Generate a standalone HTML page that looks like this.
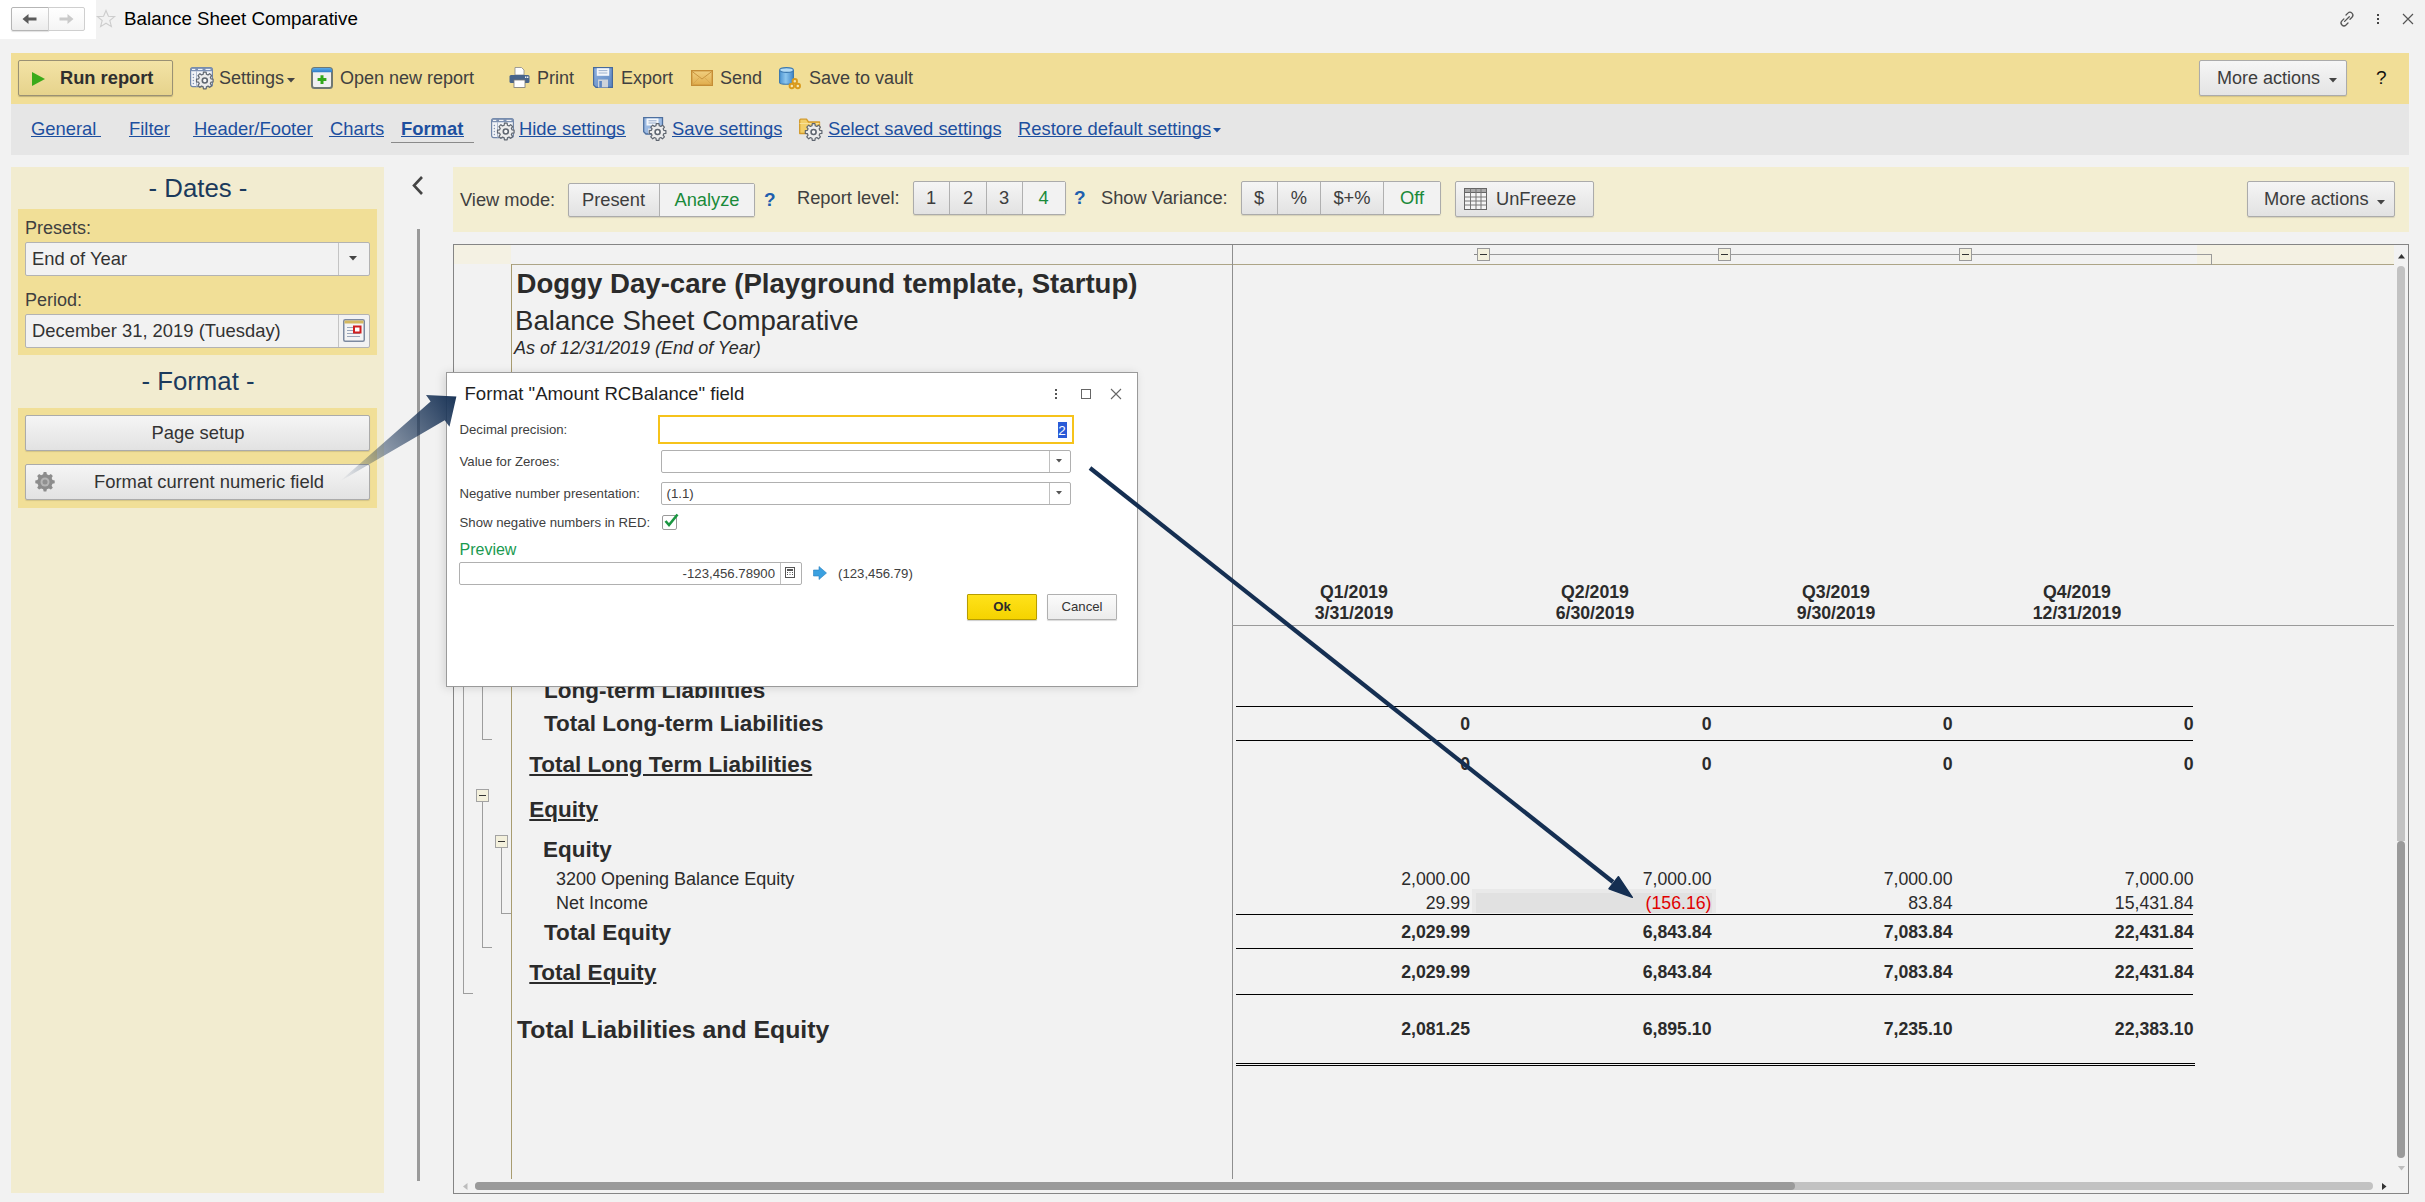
<!DOCTYPE html><html><head><meta charset="utf-8"><style>
*{margin:0;padding:0;box-sizing:border-box}
html,body{width:2425px;height:1202px;overflow:hidden;background:#f2f2f2;font-family:"Liberation Sans",sans-serif;position:relative}
.t{position:absolute;line-height:1;white-space:nowrap;color:#404040}
.btn{position:absolute;border:1px solid #ababab;border-radius:2px;background:linear-gradient(#f5f5f5,#e2e2e2);box-shadow:0 1px 1px rgba(0,0,0,.12)}
.u{text-decoration:underline;text-underline-offset:2px}
.lk{color:#1e4fa3}
.b{font-weight:bold}
</style></head><body><div style="position:absolute;left:0px;top:0px;width:96px;height:39px;background:#fff"></div><div class="btn" style="left:11px;top:7px;width:38px;height:24px;border-radius:2px 0 0 2px;background:linear-gradient(#fff,#ececec);border-color:#b5b5b5"></div><div class="btn" style="left:48px;top:7px;width:37px;height:24px;border-radius:0 2px 2px 0;background:linear-gradient(#fff,#f5f5f5);border-color:#cfcfcf;box-shadow:none"></div><svg style="position:absolute;left:22px;top:13px;overflow:visible" width="16" height="12" viewBox="0 0 16 12"><path d="M0.5 6 L6.5 1 V4.5 H14.5 V7.5 H6.5 V11 Z" fill="#5a5a5a"/></svg><svg style="position:absolute;left:59px;top:13px;overflow:visible" width="16" height="12" viewBox="0 0 16 12"><path d="M14.5 6 L8.5 1 V4.5 H0.5 V7.5 H8.5 V11 Z" fill="#cacaca"/></svg><svg style="position:absolute;left:96px;top:9px;overflow:visible" width="20" height="20" viewBox="0 0 20 20"><path d="M10 1.5 L12.4 7.3 L18.6 7.6 L13.8 11.5 L15.4 17.6 L10 14.2 L4.6 17.6 L6.2 11.5 L1.4 7.6 L7.6 7.3 Z" fill="none" stroke="#cdcdcd" stroke-width="1.1"/></svg><div class="t" style="left:124px;top:9.59px;font-size:18.8px;color:#000">Balance Sheet Comparative</div><svg style="position:absolute;left:2338px;top:10px;overflow:visible" width="19" height="19" viewBox="0 0 19 19"><g fill="none" stroke="#555" stroke-width="1.3" stroke-linecap="round"><path d="M8 5 L9.9 3.1 A2.9 2.9 0 0 1 14 7.2 L12 9.2"/><path d="M10 13 L8 15 A2.9 2.9 0 0 1 3.9 10.9 L5.9 8.9"/><path d="M6.6 11.4 L11.3 6.7"/></g></svg><div style="position:absolute;left:2377px;top:14px;width:2.2px;height:2.2px;background:#444"></div><div style="position:absolute;left:2377px;top:18px;width:2.2px;height:2.2px;background:#444"></div><div style="position:absolute;left:2377px;top:22px;width:2.2px;height:2.2px;background:#444"></div><svg style="position:absolute;left:2402px;top:13px;overflow:visible" width="12" height="12" viewBox="0 0 12 12"><path d="M1 1 L11 11 M11 1 L1 11" stroke="#555" stroke-width="1.2"/></svg><div style="position:absolute;left:11px;top:53px;width:2398px;height:51px;background:#f1de97"></div><div class="btn" style="left:18px;top:60px;width:155px;height:36px;border-color:#9a9174;background:linear-gradient(#f3e3a6,#e6d38c);box-shadow:0 1px 1px rgba(0,0,0,.2)"></div><svg style="position:absolute;left:32px;top:72px;overflow:visible" width="13" height="14" viewBox="0 0 13 14"><path d="M0 0 L13 7 L0 14 Z" fill="#3aaa1a"/></svg><div class="t" style="left:60px;top:68.51px;font-size:18.3px;color:#2f2f2f;font-weight:bold">Run report</div><svg style="position:absolute;left:190px;top:67px;overflow:visible" width="24" height="24" viewBox="0 0 24 24"><rect x="0.6" y="0.6" width="21.8" height="19" rx="2" fill="#f2f4f8" stroke="#7186a8" stroke-width="1.2"/><rect x="0.6" y="0.6" width="21.8" height="3.6" rx="1.5" fill="#7d91b2"/><path d="M2 2.4 H5.3 M8 2.4 H12.5 M15.5 2.4 H20.5" stroke="#fff" stroke-width="1"/><path d="M6.5 4.2 V19.5 M14 4.2 V19.5" stroke="#b0bccf" stroke-width="1"/><circle cx="3.4" cy="7.5" r="0.75" fill="#8595b0"/><circle cx="3.4" cy="10.5" r="0.75" fill="#8595b0"/><circle cx="3.4" cy="13.5" r="0.75" fill="#8595b0"/><circle cx="3.4" cy="16.5" r="0.75" fill="#8595b0"/><path d="M13.42 5.21 L16.18 5.21 L16.44 7.31 L18.01 7.97 L19.68 6.67 L21.63 8.62 L20.33 10.29 L20.99 11.86 L23.09 12.12 L23.09 14.88 L20.99 15.14 L20.33 16.71 L21.63 18.38 L19.68 20.33 L18.01 19.03 L16.44 19.69 L16.18 21.79 L13.42 21.79 L13.16 19.69 L11.59 19.03 L9.92 20.33 L7.97 18.38 L9.27 16.71 L8.61 15.14 L6.51 14.88 L6.51 12.12 L8.61 11.86 L9.27 10.29 L7.97 8.62 L9.92 6.67 L11.59 7.97 L13.16 7.31 Z" fill="#ececec" stroke="#5f6670" stroke-width="1.2" stroke-linejoin="round"/><circle cx="14.8" cy="13.5" r="2.5" fill="#fafafa" stroke="#5f6670" stroke-width="1.6"/></svg><div class="t" style="left:219px;top:68.76px;font-size:18px;">Settings</div><svg style="position:absolute;left:287px;top:78px;overflow:visible" width="8" height="5" viewBox="0 0 8 5"><path d="M0 0 H8 L4 4.5 Z" fill="#444"/></svg><svg style="position:absolute;left:311px;top:67px;overflow:visible" width="22" height="22" viewBox="0 0 22 22"><defs><linearGradient id="onr" x1="0" y1="0" x2="0" y2="1"><stop offset="0" stop-color="#5aaae8"/><stop offset="1" stop-color="#2f7cc8"/></linearGradient></defs><rect x="1" y="1" width="20" height="20" rx="2.5" fill="#f0f0f0" stroke="#6f7873" stroke-width="2"/><path d="M1 5.2 V3.5 A2.5 2.5 0 0 1 3.5 1 H18.5 A2.5 2.5 0 0 1 21 3.5 V5.2 Z" fill="url(#onr)"/><path d="M11 8.2 V17 M6.6 12.6 H15.4" stroke="#33a81a" stroke-width="3"/></svg><div class="t" style="left:340px;top:68.76px;font-size:18px;">Open new report</div><svg style="position:absolute;left:509px;top:67px;overflow:visible" width="21" height="21" viewBox="0 0 21 21"><path d="M6 0.5 H12.5 L15 3 V8 H6 Z" fill="#fff" stroke="#888" stroke-width="0.8"/><rect x="0.5" y="8" width="20" height="8" rx="1.5" fill="#48648a"/><rect x="5" y="13" width="11" height="7.5" fill="#fff" stroke="#777" stroke-width="0.8"/><rect x="16" y="9.5" width="1.4" height="1.4" fill="#fff"/><rect x="18" y="9.5" width="1.4" height="1.4" fill="#fff"/></svg><div class="t" style="left:537px;top:68.76px;font-size:18px;">Print</div><svg style="position:absolute;left:593px;top:67px;overflow:visible" width="20" height="21" viewBox="0 0 20 21"><defs><linearGradient id="flp" x1="0" y1="0" x2="1" y2="1"><stop offset="0" stop-color="#8fb2e0"/><stop offset="1" stop-color="#5d86c0"/></linearGradient></defs><path d="M0.6 0.6 H19.4 V20.4 H3 L0.6 18 Z" fill="url(#flp)" stroke="#46699c" stroke-width="1.2"/><rect x="3.8" y="1.2" width="12.4" height="7.6" fill="#f3f6fa"/><path d="M5.6 3.6 H14.4 M5.6 6 H14.4" stroke="#93a9c9" stroke-width="0.9"/><rect x="5" y="12.5" width="10" height="7.9" fill="#cdd3da"/><rect x="6.3" y="14" width="2.6" height="6.4" fill="#5d86c0"/></svg><div class="t" style="left:621px;top:68.76px;font-size:18px;">Export</div><svg style="position:absolute;left:691px;top:70px;overflow:visible" width="22" height="16" viewBox="0 0 22 16"><defs><linearGradient id="env" x1="0" y1="0" x2="0" y2="1"><stop offset="0" stop-color="#f0cf80"/><stop offset="1" stop-color="#e0ad4c"/></linearGradient></defs><rect x="0.7" y="0.7" width="20.6" height="14.6" fill="url(#env)" stroke="#c58d35" stroke-width="1.4"/><path d="M1.2 1.5 L11 9 L20.8 1.5" fill="none" stroke="#c9953f" stroke-width="1"/><path d="M1.2 14.8 L8.3 7.6 M20.8 14.8 L13.7 7.6" stroke="#d6a650" stroke-width="0.8"/></svg><div class="t" style="left:720px;top:68.76px;font-size:18px;">Send</div><svg style="position:absolute;left:779px;top:67px;overflow:visible" width="23" height="22" viewBox="0 0 23 22"><defs><linearGradient id="vlt" x1="0" y1="0" x2="1" y2="0"><stop offset="0" stop-color="#4b93d1"/><stop offset="0.45" stop-color="#8cc6ee"/><stop offset="1" stop-color="#3f86c8"/></linearGradient></defs><path d="M0.6 3 V15.5 C0.6 17.8 14.4 17.8 14.4 15.5 V3" fill="url(#vlt)" stroke="#3a78b0" stroke-width="1.1"/><ellipse cx="7.5" cy="3" rx="6.9" ry="2.4" fill="#b5dcf5" stroke="#3a78b0" stroke-width="1.1"/><g fill="#f6e7b5" stroke="#d99a1c" stroke-width="1.9"><circle cx="12.8" cy="19" r="2.2"/><circle cx="18.8" cy="19" r="2.2"/><circle cx="15.8" cy="14.2" r="2.2"/></g></svg><div class="t" style="left:809px;top:68.76px;font-size:18px;">Save to vault</div><div class="btn" style="left:2199px;top:60px;width:148px;height:36px;background:linear-gradient(#f6f6f6,#e4e4e4)"></div><div class="t" style="left:2217px;top:68.76px;font-size:18px;color:#3d3d3d">More actions</div><svg style="position:absolute;left:2329px;top:78px;overflow:visible" width="8" height="5" viewBox="0 0 8 5"><path d="M0 0 H8 L4 4.5 Z" fill="#444"/></svg><div class="t" style="left:2376px;top:67.92px;font-size:19px;color:#111">?</div><div style="position:absolute;left:11px;top:104px;width:2398px;height:51px;background:#e6e6e6"></div><div class="t" style="left:31px;top:120.42px;font-size:18.4px;color:#1d4f9f">General&nbsp;</div><div class="t" style="left:129px;top:120.42px;font-size:18.4px;color:#1d4f9f">Filter</div><div class="t" style="left:194px;top:120.42px;font-size:18.4px;color:#1d4f9f">Header/Footer</div><div class="t" style="left:330px;top:120.42px;font-size:18.4px;color:#1d4f9f">Charts</div><div class="t" style="left:401px;top:120.42px;font-size:18.4px;color:#1d4f9f;font-weight:bold">Format</div><div style="position:absolute;left:31px;top:136px;width:70px;height:1px;background:#1d4f9f"></div><div style="position:absolute;left:129px;top:136px;width:41px;height:1px;background:#1d4f9f"></div><div style="position:absolute;left:193px;top:136px;width:120px;height:1px;background:#1d4f9f"></div><div style="position:absolute;left:329px;top:136px;width:55px;height:1px;background:#1d4f9f"></div><div style="position:absolute;left:401px;top:136px;width:63px;height:1px;background:#1d4f9f"></div><div style="position:absolute;left:391px;top:142px;width:83px;height:1px;background:#8a8a8a"></div><svg style="position:absolute;left:491px;top:118px;overflow:visible" width="24" height="24" viewBox="0 0 24 24"><rect x="0.6" y="0.6" width="21.8" height="19" rx="2" fill="#f2f4f8" stroke="#7186a8" stroke-width="1.2"/><rect x="0.6" y="0.6" width="21.8" height="3.6" rx="1.5" fill="#7d91b2"/><path d="M2 2.4 H5.3 M8 2.4 H12.5 M15.5 2.4 H20.5" stroke="#fff" stroke-width="1"/><path d="M6.5 4.2 V19.5 M14 4.2 V19.5" stroke="#b0bccf" stroke-width="1"/><circle cx="3.4" cy="7.5" r="0.75" fill="#8595b0"/><circle cx="3.4" cy="10.5" r="0.75" fill="#8595b0"/><circle cx="3.4" cy="13.5" r="0.75" fill="#8595b0"/><circle cx="3.4" cy="16.5" r="0.75" fill="#8595b0"/><path d="M13.42 5.21 L16.18 5.21 L16.44 7.31 L18.01 7.97 L19.68 6.67 L21.63 8.62 L20.33 10.29 L20.99 11.86 L23.09 12.12 L23.09 14.88 L20.99 15.14 L20.33 16.71 L21.63 18.38 L19.68 20.33 L18.01 19.03 L16.44 19.69 L16.18 21.79 L13.42 21.79 L13.16 19.69 L11.59 19.03 L9.92 20.33 L7.97 18.38 L9.27 16.71 L8.61 15.14 L6.51 14.88 L6.51 12.12 L8.61 11.86 L9.27 10.29 L7.97 8.62 L9.92 6.67 L11.59 7.97 L13.16 7.31 Z" fill="#ececec" stroke="#5f6670" stroke-width="1.2" stroke-linejoin="round"/><circle cx="14.8" cy="13.5" r="2.5" fill="#fafafa" stroke="#5f6670" stroke-width="1.6"/></svg><div class="t" style="left:519px;top:120.42px;font-size:18.4px;color:#1d4f9f">Hide settings</div><div style="position:absolute;left:519px;top:136px;width:107px;height:1px;background:#1d4f9f"></div><svg style="position:absolute;left:643px;top:117px;overflow:visible" width="24" height="24" viewBox="0 0 24 24"><path d="M0.7 0.7 H19.5 V17 H3 L0.7 14.7 Z" fill="#9dbbe3" stroke="#4d6f9f" stroke-width="1.3"/><rect x="3.5" y="1.5" width="12" height="7" fill="#f4f7fb"/><path d="M5.5 3.8 H13.5 M5.5 6 H13.5" stroke="#8aa2c4" stroke-width="0.9"/><rect x="5" y="11.5" width="8" height="5" fill="#d6dde8"/><path d="M13.22 6.71 L15.98 6.71 L16.24 8.81 L17.81 9.47 L19.48 8.17 L21.43 10.12 L20.13 11.79 L20.79 13.36 L22.89 13.62 L22.89 16.38 L20.79 16.64 L20.13 18.21 L21.43 19.88 L19.48 21.83 L17.81 20.53 L16.24 21.19 L15.98 23.29 L13.22 23.29 L12.96 21.19 L11.39 20.53 L9.72 21.83 L7.77 19.88 L9.07 18.21 L8.41 16.64 L6.31 16.38 L6.31 13.62 L8.41 13.36 L9.07 11.79 L7.77 10.12 L9.72 8.17 L11.39 9.47 L12.96 8.81 Z" fill="#ececec" stroke="#5f6670" stroke-width="1.2" stroke-linejoin="round"/><circle cx="14.6" cy="15" r="2.5" fill="#fafafa" stroke="#5f6670" stroke-width="1.6"/></svg><div class="t" style="left:672px;top:120.42px;font-size:18.4px;color:#1d4f9f">Save settings</div><div style="position:absolute;left:672px;top:136px;width:110px;height:1px;background:#1d4f9f"></div><svg style="position:absolute;left:799px;top:117px;overflow:visible" width="24" height="24" viewBox="0 0 24 24"><path d="M0.7 3 V16.5 H20.5 V5 H9.5 L7.5 2.2 H1.5 Z" fill="#f2cf6a" stroke="#d39a2a" stroke-width="1.3" stroke-linejoin="round"/><path d="M0.7 6.5 H20.5" stroke="#f8e19a" stroke-width="1"/><path d="M13.22 6.71 L15.98 6.71 L16.24 8.81 L17.81 9.47 L19.48 8.17 L21.43 10.12 L20.13 11.79 L20.79 13.36 L22.89 13.62 L22.89 16.38 L20.79 16.64 L20.13 18.21 L21.43 19.88 L19.48 21.83 L17.81 20.53 L16.24 21.19 L15.98 23.29 L13.22 23.29 L12.96 21.19 L11.39 20.53 L9.72 21.83 L7.77 19.88 L9.07 18.21 L8.41 16.64 L6.31 16.38 L6.31 13.62 L8.41 13.36 L9.07 11.79 L7.77 10.12 L9.72 8.17 L11.39 9.47 L12.96 8.81 Z" fill="#ececec" stroke="#5f6670" stroke-width="1.2" stroke-linejoin="round"/><circle cx="14.6" cy="15" r="2.5" fill="#fafafa" stroke="#5f6670" stroke-width="1.6"/></svg><div class="t" style="left:828px;top:120.42px;font-size:18.4px;color:#1d4f9f">Select saved settings</div><div style="position:absolute;left:828px;top:136px;width:173px;height:1px;background:#1d4f9f"></div><div class="t" style="left:1018px;top:120.42px;font-size:18.4px;color:#1d4f9f">Restore default settings</div><div style="position:absolute;left:1018px;top:136px;width:193px;height:1px;background:#1d4f9f"></div><svg style="position:absolute;left:1213px;top:128px;overflow:visible" width="8" height="5" viewBox="0 0 8 5"><path d="M0 0 H8 L4 4.5 Z" fill="#1d4f9f"/></svg><div style="position:absolute;left:11px;top:167px;width:373px;height:1026px;background:#f2ecd0"></div><div class="t" style="left:-102px;width:600px;text-align:center;top:175.66px;font-size:25.8px;color:#1b3a5c">- Dates -</div><div style="position:absolute;left:18px;top:209px;width:359px;height:146px;background:#f1df97"></div><div class="t" style="left:25px;top:218.76px;font-size:18px;">Presets:</div><div style="position:absolute;left:25px;top:242px;width:345px;height:34px;border:1px solid #b3b3b3;border-radius:2px;background:#f2f2f2"></div><div style="position:absolute;left:338px;top:243px;width:1px;height:32px;background:#c4c4c4"></div><div class="t" style="left:32px;top:249.72px;font-size:18.4px;color:#333">End of Year</div><svg style="position:absolute;left:349px;top:256px;overflow:visible" width="8" height="5" viewBox="0 0 8 5"><path d="M0 0 H8 L4 4.5 Z" fill="#444"/></svg><div class="t" style="left:25px;top:290.56px;font-size:18px;">Period:</div><div style="position:absolute;left:25px;top:314px;width:345px;height:34px;border:1px solid #b3b3b3;border-radius:2px;background:#f2f2f2"></div><div style="position:absolute;left:338px;top:315px;width:1px;height:32px;background:#c4c4c4"></div><div class="t" style="left:32px;top:322.22px;font-size:18.4px;color:#333">December 31, 2019 (Tuesday)</div><svg style="position:absolute;left:343px;top:319px;overflow:visible" width="22" height="23" viewBox="0 0 22 23"><rect x="0.75" y="0.75" width="20.5" height="21.5" rx="1.5" fill="#f4f4f4" stroke="#7d8aa0" stroke-width="1.5"/><rect x="1.5" y="1.5" width="19" height="3" fill="#d4b860"/><path d="M4 8.5 H10 M4 11.5 H10 M4 14.5 H17 M4 17.5 H17" stroke="#9aa6ba"/><rect x="11" y="7.5" width="6.5" height="6" fill="#fff" stroke="#d01f1f" stroke-width="2"/></svg><div class="t" style="left:-102px;width:600px;text-align:center;top:368.66px;font-size:25.8px;color:#1b3a5c">- Format -</div><div style="position:absolute;left:18px;top:408px;width:359px;height:100px;background:#f1df97"></div><div class="btn" style="left:25px;top:415px;width:345px;height:36px"></div><div class="t" style="left:-102px;width:600px;text-align:center;top:424.42px;font-size:18.4px;color:#333">Page setup</div><div class="btn" style="left:25px;top:464px;width:345px;height:36px"></div><div class="t" style="left:-91px;width:600px;text-align:center;top:473.42px;font-size:18.4px;color:#333">Format current numeric field</div><svg style="position:absolute;left:34px;top:471px;overflow:visible" width="22" height="22" viewBox="0 0 22 22"><g transform="translate(11 11)"><path d="M-1.6 -10 H1.6 L2.2 -7.4 L4.6 -6.4 L6.9 -7.8 L9.2 -5.5 L7.8 -3.2 L8.8 -0.8 L11.4 -0.2 V3 L8.8 3.6 L7.8 6 L9.2 8.3 L6.9 10.6 L4.6 9.2 L2.2 10.2 L1.6 12.8 H-1.6 L-2.2 10.2 L-4.6 9.2 L-6.9 10.6 L-9.2 8.3 L-7.8 6 L-8.8 3.6 L-11.4 3 V-0.2 L-8.8 -0.8 L-7.8 -3.2 L-9.2 -5.5 L-6.9 -7.8 L-4.6 -6.4 L-2.2 -7.4 Z" transform="translate(0 -1.4) scale(0.85)" fill="#8c8c8c"/><circle cx="0" cy="0" r="4.5" fill="#b5b5b5"/><circle cx="0" cy="0" r="2.5" fill="#909090"/></g></svg><svg style="position:absolute;left:411px;top:175px;overflow:visible" width="14" height="21" viewBox="0 0 14 21"><path d="M11 2 L3 10.5 L11 19" fill="none" stroke="#444" stroke-width="2.6"/></svg><div style="position:absolute;left:417px;top:229px;width:3px;height:952px;background:#9a9a9a"></div><div style="position:absolute;left:453px;top:167px;width:1956px;height:65px;background:#f3eed2"></div><div class="t" style="left:460px;top:190.51px;font-size:18.3px;">View mode:</div><div class="btn" style="left:568px;top:183px;width:187px;height:34px"></div><div style="position:absolute;left:659px;top:184px;width:1px;height:32px;background:#b0b0b0"></div><div style="position:absolute;left:660px;top:184px;width:94px;height:32px;background:#f2f2f2"></div><div class="t" style="left:313.5px;width:600px;text-align:center;top:190.51px;font-size:18.3px;color:#3d3d3d">Present</div><div class="t" style="left:407px;width:600px;text-align:center;top:190.51px;font-size:18.3px;color:#1a8a3a">Analyze</div><div class="t" style="left:764px;top:189.92px;font-size:19px;color:#1e5fae;font-weight:bold">?</div><div class="t" style="left:797px;top:188.51px;font-size:18.3px;">Report level:</div><div class="btn" style="left:913px;top:181px;width:153px;height:34px"></div><div style="position:absolute;left:949px;top:182px;width:1px;height:32px;background:#b0b0b0"></div><div style="position:absolute;left:986px;top:182px;width:1px;height:32px;background:#b0b0b0"></div><div style="position:absolute;left:1022px;top:182px;width:1px;height:32px;background:#b0b0b0"></div><div style="position:absolute;left:1023px;top:182px;width:42px;height:32px;background:#f2f2f2"></div><div class="t" style="left:631px;width:600px;text-align:center;top:188.51px;font-size:18.3px;color:#3d3d3d">1</div><div class="t" style="left:668px;width:600px;text-align:center;top:188.51px;font-size:18.3px;color:#3d3d3d">2</div><div class="t" style="left:704px;width:600px;text-align:center;top:188.51px;font-size:18.3px;color:#3d3d3d">3</div><div class="t" style="left:743.5px;width:600px;text-align:center;top:188.51px;font-size:18.3px;color:#1a8a3a">4</div><div class="t" style="left:1074px;top:187.92px;font-size:19px;color:#1e5fae;font-weight:bold">?</div><div class="t" style="left:1101px;top:188.51px;font-size:18.3px;">Show Variance:</div><div class="btn" style="left:1241px;top:181px;width:200px;height:34px"></div><div style="position:absolute;left:1277px;top:182px;width:1px;height:32px;background:#b0b0b0"></div><div style="position:absolute;left:1320px;top:182px;width:1px;height:32px;background:#b0b0b0"></div><div style="position:absolute;left:1383px;top:182px;width:1px;height:32px;background:#b0b0b0"></div><div style="position:absolute;left:1384px;top:182px;width:56px;height:32px;background:#f2f2f2"></div><div class="t" style="left:959px;width:600px;text-align:center;top:188.51px;font-size:18.3px;color:#3d3d3d">$</div><div class="t" style="left:999px;width:600px;text-align:center;top:188.51px;font-size:18.3px;color:#3d3d3d">%</div><div class="t" style="left:1052px;width:600px;text-align:center;top:188.51px;font-size:18.3px;color:#3d3d3d">$+%</div><div class="t" style="left:1112px;width:600px;text-align:center;top:188.51px;font-size:18.3px;color:#1a8a3a">Off</div><div class="btn" style="left:1455px;top:181px;width:139px;height:36px"></div><svg style="position:absolute;left:1464px;top:188px;overflow:visible" width="23" height="22" viewBox="0 0 23 22"><rect x="0.5" y="0.5" width="22" height="21" fill="#f4f4f4" stroke="#666"/><rect x="0.5" y="0.5" width="22" height="4" fill="#aaa" stroke="#666"/><path d="M6.5 0.5 V21.5 M12 0.5 V21.5 M17 0.5 V21.5 M0.5 9 H22.5 M0.5 13 H22.5 M0.5 17 H22.5" stroke="#777"/></svg><div class="t" style="left:1496px;top:189.81px;font-size:18.3px;color:#3d3d3d">UnFreeze</div><div class="btn" style="left:2247px;top:181px;width:148px;height:36px"></div><div class="t" style="left:2264px;top:189.81px;font-size:18.3px;color:#3d3d3d">More actions</div><svg style="position:absolute;left:2377px;top:200px;overflow:visible" width="8" height="5" viewBox="0 0 8 5"><path d="M0 0 H8 L4 4.5 Z" fill="#444"/></svg><div style="position:absolute;left:453px;top:244px;width:1956px;height:950px;border:1px solid #858585"></div><div style="position:absolute;left:454px;top:245px;width:57px;height:19px;background:#f4f1e3"></div><div style="position:absolute;left:2197px;top:245px;width:197px;height:19px;background:#f4f1e3"></div><div style="position:absolute;left:511px;top:264px;width:1883px;height:1px;background:#ada587"></div><div style="position:absolute;left:511px;top:264px;width:1px;height:915px;background:#a89c70"></div><div style="position:absolute;left:1232px;top:245px;width:1px;height:934px;background:#8f8f8f"></div><div style="position:absolute;left:1232px;top:625px;width:1162px;height:1.2px;background:#9a9a9a"></div><div style="position:absolute;left:1483px;top:254px;width:729px;height:1px;background:#9a9a9a"></div><div style="position:absolute;left:1474px;top:254px;width:3px;height:1px;background:#888"></div><div style="position:absolute;left:2211px;top:254px;width:1px;height:11px;background:#9a9a9a"></div><div style="position:absolute;left:1477px;top:248px;width:13px;height:13px;border:1px solid #9a9a9a;background:#f3f0dc"></div><div style="position:absolute;left:1480px;top:253.5px;width:7px;height:1.6px;background:#333"></div><div style="position:absolute;left:1718px;top:248px;width:13px;height:13px;border:1px solid #9a9a9a;background:#f3f0dc"></div><div style="position:absolute;left:1721px;top:253.5px;width:7px;height:1.6px;background:#333"></div><div style="position:absolute;left:1959px;top:248px;width:13px;height:13px;border:1px solid #9a9a9a;background:#f3f0dc"></div><div style="position:absolute;left:1962px;top:253.5px;width:7px;height:1.6px;background:#333"></div><div class="t" style="left:516.5px;top:269.84px;font-size:27.6px;color:#2b2b2b;font-weight:bold">Doggy Day-care (Playground template, Startup)</div><div class="t" style="left:515px;top:306.84px;font-size:27.6px;color:#2b2b2b">Balance Sheet Comparative</div><div class="t" style="left:514px;top:339.36px;font-size:18px;color:#2b2b2b;font-style:italic">As of 12/31/2019 (End of Year)</div><div class="t" style="left:1054px;width:600px;text-align:center;top:584.02px;font-size:17.7px;color:#2b2b2b;font-weight:bold">Q1/2019</div><div class="t" style="left:1054px;width:600px;text-align:center;top:604.72px;font-size:17.7px;color:#2b2b2b;font-weight:bold">3/31/2019</div><div class="t" style="left:1295px;width:600px;text-align:center;top:584.02px;font-size:17.7px;color:#2b2b2b;font-weight:bold">Q2/2019</div><div class="t" style="left:1295px;width:600px;text-align:center;top:604.72px;font-size:17.7px;color:#2b2b2b;font-weight:bold">6/30/2019</div><div class="t" style="left:1536px;width:600px;text-align:center;top:584.02px;font-size:17.7px;color:#2b2b2b;font-weight:bold">Q3/2019</div><div class="t" style="left:1536px;width:600px;text-align:center;top:604.72px;font-size:17.7px;color:#2b2b2b;font-weight:bold">9/30/2019</div><div class="t" style="left:1777px;width:600px;text-align:center;top:584.02px;font-size:17.7px;color:#2b2b2b;font-weight:bold">Q4/2019</div><div class="t" style="left:1777px;width:600px;text-align:center;top:604.72px;font-size:17.7px;color:#2b2b2b;font-weight:bold">12/31/2019</div><div style="position:absolute;left:463px;top:626px;width:1px;height:367px;background:#9d9d9d"></div><div style="position:absolute;left:463px;top:993px;width:10px;height:1px;background:#9d9d9d"></div><div style="position:absolute;left:482px;top:626px;width:1px;height:113px;background:#9d9d9d"></div><div style="position:absolute;left:482px;top:739px;width:10px;height:1px;background:#9d9d9d"></div><div style="position:absolute;left:482px;top:801px;width:1px;height:146px;background:#9d9d9d"></div><div style="position:absolute;left:482px;top:947px;width:10px;height:1px;background:#9d9d9d"></div><div style="position:absolute;left:501px;top:848px;width:1px;height:65px;background:#9d9d9d"></div><div style="position:absolute;left:501px;top:913px;width:10px;height:1px;background:#9d9d9d"></div><div style="position:absolute;left:476px;top:789px;width:13px;height:13px;border:1px solid #a3a3a3;background:#f3f0dc"></div><div style="position:absolute;left:479px;top:794.5px;width:7px;height:1.6px;background:#333"></div><div style="position:absolute;left:495px;top:835px;width:13px;height:13px;border:1px solid #a3a3a3;background:#f3f0dc"></div><div style="position:absolute;left:498px;top:840.5px;width:7px;height:1.6px;background:#333"></div><div class="t" style="left:544px;top:680.45px;font-size:22.5px;color:#2b2b2b;font-weight:bold">Long-term Liabilities</div><div class="t" style="left:544px;top:713.45px;font-size:22.5px;color:#2b2b2b;font-weight:bold">Total Long-term Liabilities</div><div class="t" style="left:529.3px;top:753.75px;font-size:22.5px;color:#2b2b2b;font-weight:bold;text-decoration:underline;text-underline-offset:2px;text-decoration-thickness:2px">Total Long Term Liabilities</div><div class="t" style="left:529.3px;top:799.45px;font-size:22.5px;color:#2b2b2b;font-weight:bold;text-decoration:underline;text-underline-offset:2px;text-decoration-thickness:2px">Equity</div><div class="t" style="left:543px;top:839.45px;font-size:22.5px;color:#2b2b2b;font-weight:bold">Equity</div><div class="t" style="left:556px;top:869.96px;font-size:18px;color:#2b2b2b">3200 Opening Balance Equity</div><div class="t" style="left:556px;top:894.36px;font-size:18px;color:#2b2b2b">Net Income</div><div class="t" style="left:544px;top:921.75px;font-size:22.5px;color:#2b2b2b;font-weight:bold">Total Equity</div><div class="t" style="left:529.3px;top:961.75px;font-size:22.5px;color:#2b2b2b;font-weight:bold;text-decoration:underline;text-underline-offset:2px;text-decoration-thickness:2px">Total Equity</div><div class="t" style="left:517px;top:1017.51px;font-size:24.8px;color:#2b2b2b;font-weight:bold">Total Liabilities and Equity</div><div style="position:absolute;left:1236px;top:706px;width:957px;height:1px;background:#000"></div><div class="t" style="right:955px;top:716.02px;font-size:17.7px;color:#2b2b2b;font-weight:bold">0</div><div class="t" style="right:713.5px;top:716.02px;font-size:17.7px;color:#2b2b2b;font-weight:bold">0</div><div class="t" style="right:472.5px;top:716.02px;font-size:17.7px;color:#2b2b2b;font-weight:bold">0</div><div class="t" style="right:231.5px;top:716.02px;font-size:17.7px;color:#2b2b2b;font-weight:bold">0</div><div style="position:absolute;left:1236px;top:740px;width:957px;height:1px;background:#000"></div><div class="t" style="right:955px;top:756.02px;font-size:17.7px;color:#2b2b2b;font-weight:bold">0</div><div class="t" style="right:713.5px;top:756.02px;font-size:17.7px;color:#2b2b2b;font-weight:bold">0</div><div class="t" style="right:472.5px;top:756.02px;font-size:17.7px;color:#2b2b2b;font-weight:bold">0</div><div class="t" style="right:231.5px;top:756.02px;font-size:17.7px;color:#2b2b2b;font-weight:bold">0</div><div class="t" style="right:955px;top:870.52px;font-size:17.7px;color:#2b2b2b">2,000.00</div><div class="t" style="right:713.5px;top:870.52px;font-size:17.7px;color:#2b2b2b">7,000.00</div><div class="t" style="right:472.5px;top:870.52px;font-size:17.7px;color:#2b2b2b">7,000.00</div><div class="t" style="right:231.5px;top:870.52px;font-size:17.7px;color:#2b2b2b">7,000.00</div><div style="position:absolute;left:1472px;top:889px;width:244px;height:24px;background:#e9e9e9"></div><div style="position:absolute;left:1476px;top:893px;width:236px;height:20px;background:#e1e1e1"></div><div class="t" style="right:955px;top:894.82px;font-size:17.7px;color:#2b2b2b">29.99</div><div class="t" style="right:713.5px;top:894.82px;font-size:17.7px;color:#e00000">(156.16)</div><div class="t" style="right:472.5px;top:894.82px;font-size:17.7px;color:#2b2b2b">83.84</div><div class="t" style="right:231.5px;top:894.82px;font-size:17.7px;color:#2b2b2b">15,431.84</div><div style="position:absolute;left:1236px;top:914px;width:957px;height:1px;background:#000"></div><div class="t" style="right:955px;top:924.02px;font-size:17.7px;color:#2b2b2b;font-weight:bold">2,029.99</div><div class="t" style="right:713.5px;top:924.02px;font-size:17.7px;color:#2b2b2b;font-weight:bold">6,843.84</div><div class="t" style="right:472.5px;top:924.02px;font-size:17.7px;color:#2b2b2b;font-weight:bold">7,083.84</div><div class="t" style="right:231.5px;top:924.02px;font-size:17.7px;color:#2b2b2b;font-weight:bold">22,431.84</div><div style="position:absolute;left:1236px;top:948px;width:957px;height:1px;background:#000"></div><div class="t" style="right:955px;top:963.52px;font-size:17.7px;color:#2b2b2b;font-weight:bold">2,029.99</div><div class="t" style="right:713.5px;top:963.52px;font-size:17.7px;color:#2b2b2b;font-weight:bold">6,843.84</div><div class="t" style="right:472.5px;top:963.52px;font-size:17.7px;color:#2b2b2b;font-weight:bold">7,083.84</div><div class="t" style="right:231.5px;top:963.52px;font-size:17.7px;color:#2b2b2b;font-weight:bold">22,431.84</div><div style="position:absolute;left:1236px;top:994px;width:957px;height:1px;background:#000"></div><div class="t" style="right:955px;top:1020.62px;font-size:17.7px;color:#2b2b2b;font-weight:bold">2,081.25</div><div class="t" style="right:713.5px;top:1020.62px;font-size:17.7px;color:#2b2b2b;font-weight:bold">6,895.10</div><div class="t" style="right:472.5px;top:1020.62px;font-size:17.7px;color:#2b2b2b;font-weight:bold">7,235.10</div><div class="t" style="right:231.5px;top:1020.62px;font-size:17.7px;color:#2b2b2b;font-weight:bold">22,383.10</div><div style="position:absolute;left:1236px;top:1063px;width:959px;height:1px;background:#000"></div><div style="position:absolute;left:1236px;top:1065px;width:959px;height:1px;background:#000"></div><div style="position:absolute;left:2397px;top:266px;width:8px;height:575px;background:#c2c2c2;border-radius:4px 4px 0 0"></div><div style="position:absolute;left:2397px;top:841px;width:8px;height:317px;background:#9a9a9a;border-radius:4px 4px 4px 4px"></div><svg style="position:absolute;left:2398px;top:254px;overflow:visible" width="7" height="5" viewBox="0 0 7 5"><path d="M0 4.5 L3.5 0 L7 4.5 Z" fill="#333"/></svg><svg style="position:absolute;left:2398px;top:1166px;overflow:visible" width="7" height="5" viewBox="0 0 7 5"><path d="M0 0 L3.5 4.5 L7 0 Z" fill="#bdbdbd"/></svg><div style="position:absolute;left:475px;top:1182px;width:1898px;height:8px;background:#c2c2c2;border-radius:4px"></div><div style="position:absolute;left:475px;top:1182px;width:1320px;height:8px;background:#9a9a9a;border-radius:4px"></div><svg style="position:absolute;left:463px;top:1183px;overflow:visible" width="5" height="7" viewBox="0 0 5 7"><path d="M4.5 0 L0 3.5 L4.5 7 Z" fill="#bdbdbd"/></svg><svg style="position:absolute;left:2382px;top:1183px;overflow:visible" width="5" height="7" viewBox="0 0 5 7"><path d="M0 0 L4.5 3.5 L0 7 Z" fill="#333"/></svg><div style="position:absolute;left:446px;top:372px;width:692px;height:315px;background:#fff;border:1px solid #9a9a9a;box-shadow:-2px 1px 9px rgba(0,0,0,.13)"></div><div class="t" style="left:464.5px;top:384.96px;font-size:18.6px;color:#1f1f1f">Format "Amount RCBalance" field</div><div style="position:absolute;left:1055px;top:389px;width:2.2px;height:2.2px;background:#555"></div><div style="position:absolute;left:1055px;top:393px;width:2.2px;height:2.2px;background:#555"></div><div style="position:absolute;left:1055px;top:397px;width:2.2px;height:2.2px;background:#555"></div><div style="position:absolute;left:1081px;top:389px;width:10px;height:10px;border:1.3px solid #666"></div><svg style="position:absolute;left:1111px;top:389px;overflow:visible" width="10" height="10" viewBox="0 0 10 10"><path d="M0 0 L10 10 M10 0 L0 10" stroke="#666" stroke-width="1.1"/></svg><div class="t" style="left:459.5px;top:422.63px;font-size:13.2px;color:#404040">Decimal precision:</div><div class="t" style="left:459.5px;top:454.53px;font-size:13.2px;color:#404040">Value for Zeroes:</div><div class="t" style="left:459.5px;top:487.43px;font-size:13.2px;color:#404040">Negative number presentation:</div><div class="t" style="left:459.5px;top:516.43px;font-size:13.2px;color:#404040">Show negative numbers in RED:</div><div style="position:absolute;left:658px;top:415px;width:416px;height:29px;border:2px solid #f6c31b;background:#fff"></div><div style="position:absolute;left:1058px;top:422px;width:9px;height:16px;background:#2a5bd7"></div><div class="t" style="left:1058.2px;top:423.57px;font-size:13.5px;color:#fff">2</div><div style="position:absolute;left:661px;top:450px;width:410px;height:23px;border:1px solid #b0b0b0;border-radius:2px;background:#fff"></div><div style="position:absolute;left:1049px;top:451px;width:1px;height:21px;background:#c0c0c0"></div><svg style="position:absolute;left:1056px;top:459px;overflow:visible" width="6" height="4" viewBox="0 0 6 4"><path d="M0 0 H6 L3 3.5 Z" fill="#555"/></svg><div style="position:absolute;left:661px;top:482px;width:410px;height:23px;border:1px solid #b0b0b0;border-radius:2px;background:#fff"></div><div style="position:absolute;left:1049px;top:483px;width:1px;height:21px;background:#c0c0c0"></div><svg style="position:absolute;left:1056px;top:491px;overflow:visible" width="6" height="4" viewBox="0 0 6 4"><path d="M0 0 H6 L3 3.5 Z" fill="#555"/></svg><div class="t" style="left:666.5px;top:487.43px;font-size:13.2px;color:#404040">(1.1)</div><div style="position:absolute;left:662px;top:515px;width:15px;height:15px;border:1px solid #9a9a9a;border-radius:2px;background:#fff"></div><svg style="position:absolute;left:664px;top:513px;overflow:visible" width="15" height="15" viewBox="0 0 15 15"><path d="M1.5 8 L5 12 L13.5 1.5" fill="none" stroke="#1a9641" stroke-width="2.6"/></svg><div class="t" style="left:459.5px;top:542.46px;font-size:16px;color:#1a9a50">Preview</div><div style="position:absolute;left:459px;top:562px;width:343px;height:23px;border:1px solid #b0b0b0;border-radius:2px;background:#fff"></div><div style="position:absolute;left:780px;top:563px;width:1px;height:21px;background:#c0c0c0"></div><svg style="position:absolute;left:785px;top:567px;overflow:visible" width="10" height="11" viewBox="0 0 10 11"><rect x="0.5" y="0.5" width="9" height="10" fill="#fff" stroke="#555"/><rect x="2" y="2" width="6" height="2" fill="#555"/><path d="M2 5.5 H3 M4.5 5.5 H5.5 M7 5.5 H8 M2 7.5 H3 M4.5 7.5 H5.5 M7 7.5 H8" stroke="#555"/></svg><div class="t" style="right:1650px;top:567.23px;font-size:13.2px;color:#404040">-123,456.78900</div><svg style="position:absolute;left:813px;top:566px;overflow:visible" width="14" height="14" viewBox="0 0 14 14"><path d="M0.5 4 H6 V0.5 L13.5 7 L6 13.5 V10 H0.5 Z" fill="#3aa0e0" stroke="#2a80c0" stroke-width="0.6"/></svg><div class="t" style="left:838px;top:567.23px;font-size:13.2px;color:#404040">(123,456.79)</div><div style="position:absolute;left:967px;top:594px;width:70px;height:26px;border:1px solid #b79d00;border-radius:1px;background:linear-gradient(#ffe21a,#f5d300);box-shadow:0 1px 1px rgba(0,0,0,.2)"></div><div class="t" style="left:702px;width:600px;text-align:center;top:600.33px;font-size:13.2px;color:#2b2b2b;font-weight:bold">Ok</div><div style="position:absolute;left:1047px;top:594px;width:70px;height:26px;border:1px solid #b0b0b0;border-radius:1px;background:linear-gradient(#fbfbfb,#ececec);box-shadow:0 1px 1px rgba(0,0,0,.15)"></div><div class="t" style="left:782px;width:600px;text-align:center;top:600.33px;font-size:13.2px;color:#333">Cancel</div><svg style="position:absolute;left:0;top:0" width="2425" height="1202"><defs><linearGradient id="wg" x1="340" y1="481" x2="456" y2="396" gradientUnits="userSpaceOnUse"><stop offset="0" stop-color="#1b3558" stop-opacity="0"/><stop offset="0.35" stop-color="#1b3558" stop-opacity="0.45"/><stop offset="1" stop-color="#1b3558" stop-opacity="1"/></linearGradient></defs><path d="M339.7 481.4 L430.6 401.4 L426 395.1 L456.4 396.5 L449.5 426.8 L444.7 420.3 Z" fill="url(#wg)"/><path d="M1090 468 L1613 882" stroke="#152f52" stroke-width="4.2"/><path d="M1632.3 897.3 L1618.4 876.7 L1609 888.7 Z" fill="#152f52" stroke="#152f52" stroke-width="1.5" stroke-linejoin="round"/></svg></body></html>
